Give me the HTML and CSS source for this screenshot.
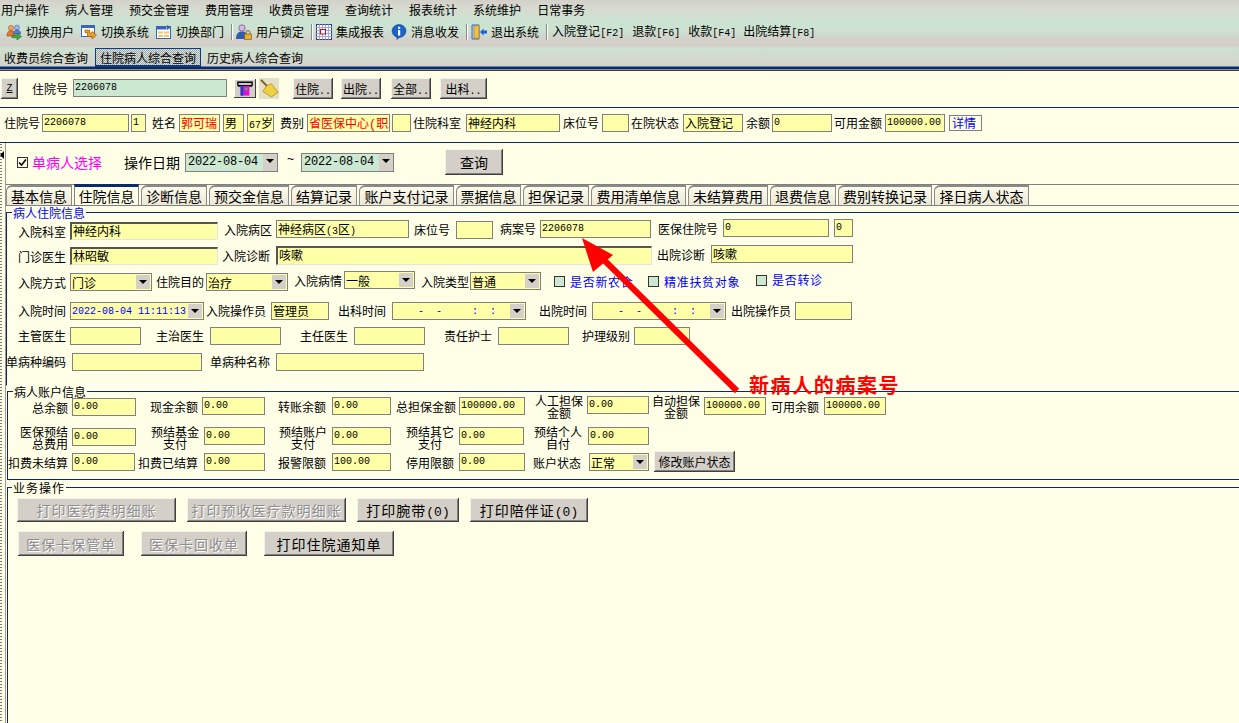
FILE: index.html
```html
<!DOCTYPE html>
<html lang="zh-CN">
<head>
<meta charset="utf-8">
<title>住院病人综合查询</title>
<link rel="stylesheet" href="styles.css">
</head>
<body>
<div class="page">
  <header class="top">
    <nav class="menu">
      <span>用户操作</span><span>病人管理</span><span>预交金管理</span><span>费用管理</span><span>收费员管理</span><span>查询统计</span><span>报表统计</span><span>系统维护</span><span>日常事务</span>
    </nav>
    <div class="toolbar">
      <div class="tool">
        <svg class="ico" viewBox="0 0 16 16"><circle cx="5" cy="4" r="2.6" fill="#e9a06a" stroke="#a05a30" stroke-width=".6"/><path d="M1 12c0-4 2-5.500 4-5.500s4 1.500 4 5.500z" fill="#e2762e" stroke="#8a4a20" stroke-width=".6"/><circle cx="11" cy="3.500" r="2.400" fill="#9fb8e6" stroke="#4a64a8" stroke-width=".6"/><path d="M7.500 10c0-3 1.500-4 3.500-4s3.500 1 3.500 4z" fill="#5a7ed0" stroke="#2c4a90" stroke-width=".6"/><path d="M6 11.500h5V9l4.500 3.500L11 16v-2.300H6z" fill="#3cb043" stroke="#1a6e20" stroke-width=".6"/></svg>
        <span>切换用户</span>
      </div>
      <div class="tool">
        <svg class="ico" viewBox="0 0 16 16"><rect x=".5" y="1.500" width="13" height="11" fill="#fff" stroke="#3a64b8"/><rect x=".5" y="1.500" width="13" height="2.500" fill="#3a64b8"/><path d="M4 6h4.500v3H11V7.500L15.500 11 11 15v-2.500H6.500v-4H4z" fill="#f0a020" stroke="#a05a10" stroke-width=".7"/></svg>
        <span>切换系统</span>
      </div>
      <div class="tool">
        <svg class="ico" viewBox="0 0 16 16"><rect x=".5" y="2.500" width="14" height="12" fill="#fff" stroke="#3a64b8"/><rect x=".5" y="2.500" width="10" height="3" fill="#3a64b8"/><path d="M2 7.500h5v2H2zM8 7.500h5v2H8zM2 11h5v2H2zM8 11h5v2H8z" fill="#f2c770"/><path d="M11 1l4 2.500-4 2.500z" fill="#3a64b8"/></svg>
        <span>切换部门</span>
      </div>
      <i class="sep"></i>
      <div class="tool">
        <svg class="ico" viewBox="0 0 16 16"><circle cx="6" cy="4" r="3.200" fill="#d8b8e0" stroke="#6a4a90" stroke-width=".7"/><path d="M0 15c0-6 3-7.500 6-7.500s6 1.500 6 7.500z" fill="#2f5cb0"/><rect x="8.500" y="10" width="7" height="5.500" fill="#e8b030" stroke="#8a6410" stroke-width=".7"/><path d="M10 10V8.500a2 2 0 014 0V10" fill="none" stroke="#8a6410"/></svg>
        <span>用户锁定</span>
      </div>
      <i class="sep"></i>
      <div class="tool">
        <svg class="ico" viewBox="0 0 16 16"><rect x=".5" y=".5" width="15" height="15" fill="#fff" stroke="#3040a0"/><path d="M.5 3.500h15M.5 6.500h15M.5 9.500h15M.5 12.500h15M3.500.5v15M6.500.5v15M9.500.5v15M12.500.5v15" stroke="#a0a8e0"/><rect x="4.500" y="5.500" width="5" height="4.500" fill="#fff" stroke="#b01030"/></svg>
        <span>集成报表</span>
      </div>
      <div class="tool">
        <svg class="ico" viewBox="0 0 16 16"><path d="M8 .5a7 6.500 0 110 13l-2 2v-2.300A7 6.500 0 018 .5z" fill="#1c62c8" stroke="#0c3a80" stroke-width=".6"/><rect x="7" y="2.800" width="2.200" height="2" fill="#fff"/><rect x="7" y="6" width="2.200" height="5.500" fill="#fff"/></svg>
        <span>消息收发</span>
      </div>
      <i class="sep"></i>
      <div class="tool">
        <svg class="ico" viewBox="0 0 16 16"><path d="M1 1h7v14H1z" fill="#b8ccf0" stroke="#3a64b8"/><path d="M3 2.500l5-1.500v14l-5-1.500z" fill="#f0c040" stroke="#a07810" stroke-width=".6"/><path d="M9 8l3.500-3.500v2H16v3h-3.500v2z" fill="#1c62e0"/></svg>
        <span>退出系统</span>
      </div>
      <i class="sep sep-last"></i>
      <span class="cmd">入院登记<span class="mono">[F2]</span></span>
      <span class="cmd">退款<span class="mono">[F6]</span></span>
      <span>收款<span class="mono">[F4]</span></span>
      <span>出院结算<span class="mono">[F8]</span></span>
    </div>
    <div class="doc-tabs">
      <span class="doc-tab">收费员综合查询</span>
      <span class="doc-tab doc-tab-on">住院病人综合查询</span>
      <span class="doc-tab doc-tab-last">历史病人综合查询</span>
    </div>
  </header>

  <section class="search">
    <button class="btn btn-z"><u>Z</u></button>
    <span class="search-label">住院号</span>
    <div class="field green num search-input">2206078</div>
    <button class="icon-btn icon-print" aria-label="打印">
      <svg viewBox="0 0 18 16"><path d="M1 5V1h16v4" fill="none" stroke="#000" stroke-width="1.500"/><rect x="1" y="4" width="16" height="2" fill="#000"/><rect x="4" y="5" width="10" height="11" fill="#e010d8"/><rect x="4" y="5" width="3" height="11" fill="#2040c0"/><rect x="9" y="7" width="3" height="3" fill="#50b040"/></svg>
    </button>
    <button class="icon-btn icon-broom" aria-label="清除">
      <svg viewBox="0 0 20 20"><path d="M1 1l8 8" stroke="#7a5a20" stroke-width="2"/><path d="M7 7l5-2 7 9-7 5-9-6z" fill="#f0d040" stroke="#a08010" stroke-width=".7"/></svg>
    </button>
    <button class="btn btn-s">住院<span class="mono">..</span></button>
    <button class="btn btn-s ml8">出院<span class="mono">..</span></button>
    <button class="btn btn-s ml10">全部<span class="mono">..</span></button>
    <button class="btn btn-s btn-last">出科<span class="mono">..</span></button>
  </section>

  <section class="info">
    <span class="lab pr2">住院号</span><div class="field num">2206078</div>
    <div class="field num ml2">1</div>
    <span class="lab pr3">姓名</span><div class="field red">郭可瑞</div>
    <div class="field ml3">男</div>
    <div class="field ml3"><span class="mono">67</span>岁</div>
    <span class="lab pr3">费别</span><div class="field red clip">省医保中心<span class="paren">(</span>职工)</div>
    <div class="field ml2"></div>
    <span class="lab pr5">住院科室</span><div class="field">神经内科</div>
    <span class="lab pr3">床位号</span><div class="field"></div>
    <span class="lab pr4">在院状态</span><div class="field">入院登记</div>
    <span class="lab pr2">余额</span><div class="field num">0</div>
    <span class="lab pr3">可用金额</span><div class="field num">100000.00</div>
    <div class="field link ml4">详情</div>
  </section>

  <div class="body">
    <aside class="split"><b class="split-arrow"></b></aside>
    <main class="main">
      <div class="filter">
        <span class="cb cb-on"><svg viewBox="0 0 9 9"><path d="M1 4.500l2.500 2.500L8 1.500" fill="none" stroke="#000" stroke-width="1.600"/></svg></span>
        <span class="pink">单病人选择</span>
        <span class="filter-label">操作日期</span>
        <div class="date-box">2022-08-04<i class="arrow"></i></div>
        <span class="tilde">~</span>
        <div class="date-box date-box-2">2022-08-04<i class="arrow"></i></div>
        <button class="btn btn-query">查询</button>
      </div>

      <div class="tabs">
        <span class="tab">基本信息</span>
        <span class="tab tab-on">住院信息</span>
        <span class="tab">诊断信息</span>
        <span class="tab">预交金信息</span>
        <span class="tab">结算记录</span>
        <span class="tab">账户支付记录</span>
        <span class="tab">票据信息</span>
        <span class="tab">担保记录</span>
        <span class="tab">费用清单信息</span>
        <span class="tab">未结算费用</span>
        <span class="tab">退费信息</span>
        <span class="tab">费别转换记录</span>
        <span class="tab">择日病人状态</span>
      </div>

      <section class="group g-inp">
        <span class="legend legend-blue">病人住院信息</span>
        <div class="row ra">
          <span class="lab m4">入院科室</span><div class="field inset m3">神经内科</div>
          <span class="lab m2">入院病区</span><div class="field m1">神经病区<span class="mono">(3</span>区<span class="mono">)</span></div>
          <span class="lab pr6 m2">床位号</span><div class="field m2"></div>
          <span class="lab m1">病案号</span><div class="field num m1">2206078</div>
          <span class="lab pr5 m1">医保住院号</span><div class="field num">0</div>
          <div class="field num ml5">0</div>
        </div>
        <div class="row rb">
          <span class="lab m3">门诊医生</span><div class="field inset m2">林昭敏</div>
          <span class="lab pr6 m2">入院诊断</span><div class="field inset tall m1">咳嗽</div>
          <span class="lab pr6 m1">出院诊断</span><div class="field">咳嗽</div>
        </div>
        <div class="row rc">
          <span class="lab m3">入院方式</span><div class="field select m2">门诊<i class="arrow"></i></div>
          <span class="lab pr2 m2">住院目的</span><div class="field select m2">治疗<i class="arrow"></i></div>
          <span class="lab pr2 m1">入院病情</span><div class="field select">一般<i class="arrow"></i></div>
          <span class="lab pr1 m2">入院类型</span><div class="field select m1">普通<i class="arrow"></i></div>
          <label class="check check-first"><span class="cb"></span><span>是否新农合</span></label>
          <label class="check"><span class="cb"></span><span>精准扶贫对象</span></label>
          <label class="check check-up"><span class="cb"></span><span>是否转诊</span></label>
        </div>
        <div class="row rd">
          <span class="lab">入院时间</span><div class="field select blue-num">2022-08-04 11:11:13<i class="arrow"></i></div>
          <span class="lab pr5">入院操作员</span><div class="field">管理员</div>
          <span class="lab pr6">出科时间</span><div class="field select blue-num pre">    -  -     :  :<i class="arrow"></i></div>
          <span class="lab pr5">出院时间</span><div class="field select blue-num pre">    -  -     :  :<i class="arrow"></i></div>
          <span class="lab">出院操作员</span><div class="field"></div>
        </div>
        <div class="row re">
          <span class="lab">主管医生</span><div class="field"></div>
          <span class="lab pr6">主治医生</span><div class="field"></div>
          <span class="lab pr6">主任医生</span><div class="field"></div>
          <span class="lab pr6">责任护士</span><div class="field"></div>
          <span class="lab">护理级别</span><div class="field"></div>
        </div>
        <div class="row rf">
          <span class="lab pr6">单病种编码</span><div class="field"></div>
          <span class="lab pr6">单病种名称</span><div class="field"></div>
        </div>
      </section>

      <section class="group g-acc">
        <span class="legend">病人账户信息</span>
        <div class="row r1">
          <span class="lab m3">总余额</span><div class="field num m2">0.00</div>
          <span class="lab m2">现金余额</span><div class="field num m1">0.00</div>
          <span class="lab pr6 m2">转账余额</span><div class="field num m1">0.00</div>
          <span class="lab pr3 m2">总担保金额</span><div class="field num m1">100000.00</div>
          <span class="lab two">人工担保<br>金额</span><div class="field num">0.00</div>
          <span class="lab two">自动担保<br>金额</span><div class="field num m1">100000.00</div>
          <span class="lab pr5 m2">可用余额</span><div class="field num m1">100000.00</div>
        </div>
        <div class="row r2">
          <span class="lab two two-r">医保预结<br>总费用</span><div class="field num m1">0.00</div>
          <span class="lab two pr5">预结基金<br>支付</span><div class="field num">0.00</div>
          <span class="lab two pr5">预结账户<br>支付</span><div class="field num">0.00</div>
          <span class="lab two pr5">预结其它<br>支付</span><div class="field num">0.00</div>
          <span class="lab two pr6">预结个人<br>自付</span><div class="field num">0.00</div>
        </div>
        <div class="row r3">
          <span class="lab m3">扣费未结算</span><div class="field num m2">0.00</div>
          <span class="lab pr6 m3">扣费已结算</span><div class="field num m2">0.00</div>
          <span class="lab pr6 m3">报警限额</span><div class="field num m2">100.00</div>
          <span class="lab pr5 m3">停用限额</span><div class="field num m2">0.00</div>
          <span class="lab pr8 m3">账户状态</span><div class="field select m2">正常<i class="arrow"></i></div>
          <button class="btn btn-acct">修改账户状态</button>
        </div>
      </section>

      <section class="group g-ops">
        <span class="legend legend-ops">业务操作</span>
        <div class="ops ops-1">
          <button class="btn btn-big" disabled>打印医药费明细账</button>
          <button class="btn btn-big" disabled>打印预收医疗款明细账</button>
          <button class="btn btn-big">打印腕带<span class="mono-b">(0)</span></button>
          <button class="btn btn-big">打印陪伴证<span class="mono-b">(0)</span></button>
        </div>
        <div class="ops ops-2">
          <button class="btn btn-big" disabled>医保卡保管单</button>
          <button class="btn btn-big" disabled>医保卡回收单</button>
          <button class="btn btn-big">打印住院通知单</button>
        </div>
      </section>
    </main>
  </div>

  <svg class="pointer" viewBox="0 0 1239 723" aria-hidden="true">
    <line x1="737" y1="391" x2="600" y2="256" stroke="#ff0000" stroke-width="6"/>
    <polygon points="582,238 613,255 593,272" fill="#ff0000"/>
  </svg>
  <span class="note">新病人的病案号</span>
</div>
</body>
</html>
```
FILE: styles.css
```css
* { box-sizing: border-box; }
html, body { margin: 0; padding: 0; }
body {
  font-family: "Noto Sans CJK SC", "Liberation Sans", sans-serif;
  font-size: 12px;
  color: #000;
  background: #ffffe8;
}
.page {
  position: relative;
  width: 1239px;
  height: 723px;
  overflow: hidden;
  background: #ffffe8;
}
.mono { font-family: "Liberation Mono", monospace; font-size: 10px; }
.mono-b { font-family: "Liberation Mono", monospace; font-size: 13px; letter-spacing: 0; font-weight: 400; }
.paren { font-family: "Liberation Mono", monospace; font-size: 12px; }

/* header band */
.top {
  height: 71px;
  background: linear-gradient(180deg,
    #d3d0ca 0, #d6dacf 8px, #cde3d2 21px, #cde3d2 29px, #d3cfc9 41px, #d3cfc9 46px,
    #cfe0d0 48px, #d4d4cc 66px,
    #5f86b4 66px, #5f86b4 67px, #0a2a70 67px, #0a2a70 69px, #8f8f8a 69px, #8f8f8a 70px, #4a3d34 70px);
}
.menu { display: flex; gap: 16px; height: 21px; padding-left: 1px; line-height: 20px; }
.toolbar { display: flex; align-items: center; gap: 7px; height: 22px; padding-left: 6px; line-height: 22px; }
.tool { display: flex; align-items: center; gap: 4px; }
.ico { width: 16px; height: 16px; flex: none; }
.sep { width: 2px; height: 16px; margin-right: -4px; border-left: 1px solid #8a8a86; border-right: 1px solid #fff; }
.sep-last { margin-right: -3px; }
.cmd { margin-right: 1px; }
.doc-tabs { display: flex; height: 19px; margin-top: 5px; padding-left: 4px; line-height: 20px; }
.doc-tab { width: 84px; white-space: nowrap; }
.doc-tab-on {
  width: 106px;
  margin-left: 7px;
  padding-left: 4px;
  border: 1px solid #123a7a;
  border-bottom-width: 2px;
  line-height: 18px;
  background: repeating-conic-gradient(#9aa8ac 0 25%, #dde2da 0 50%) 0 0 / 2px 2px;
}
.doc-tab-last { margin-left: 6px; width: 96px; }

/* search row */
.search { display: flex; align-items: center; height: 36px; padding: 0 0 2px 1px; }
.btn {
  display: block;
  padding: 0;
  border: 0;
  background: #d4d0c8;
  color: #000;
  font: inherit;
  text-align: center;
  white-space: nowrap;
  box-shadow: inset -1px -1px 0 #404040, inset 1px 1px 0 #f4f2ee, inset -2px -2px 0 #808080;
}
.btn:disabled { color: #8e8e8e; text-shadow: 1px 1px 0 #fff; }
.btn-z { width: 17px; height: 21px; font-family: "Liberation Mono", monospace; font-size: 10px; }
.btn-s { width: 40px; height: 21px; margin-left: 0; }
.search-label { margin-left: 14px; width: 41px; }
.search-input { width: 154px; height: 18px; }
.icon-btn {
  display: flex; align-items: center; justify-content: center;
  padding: 0; border: 0;
  background: #d4d0c8;
  box-shadow: inset -1px -1px 0 #404040, inset 1px 1px 0 #fff;
}
.icon-print { width: 22px; height: 19px; margin-left: 7px; }
.icon-print svg { width: 16px; height: 15px; }
.icon-broom { width: 20px; height: 21px; margin: 0 14px 0 3px; background: #e4e0c8; box-shadow: none; }
.icon-broom svg { width: 19px; height: 19px; }
.ml8 { margin-left: 8px; }
.ml10 { margin-left: 10px; }
.btn-last { width: 47px; margin-left: 9px; }

/* info strip */
.info {
  display: grid;
  grid-template-columns: 42px 87px 17px 33px 41px 24px 30px 33px 83px 21px 55px 94px 42px 27px 54px 60px 29px 60px 53px 60px 37px;
  align-items: center;
  height: 36px;
  padding-bottom: 4px;
  border-top: 1px solid #0a2a70;
  border-bottom: 1px solid #0a2a70;
}

/* fields */
.lab {
  display: flex;
  justify-content: flex-end;
  padding-right: 4px;
  line-height: 18px;
  text-align: center;
  white-space: nowrap;
}
.field {
  height: 18px;
  min-width: 0;
  padding-left: 1px;
  border: 1px solid #808080;
  background: #ffffa8;
  line-height: 15px;
  white-space: nowrap;
  overflow: hidden;
}
.num { font-family: "Liberation Mono", monospace; font-size: 10px; }
.red { color: #f00; }
.clip { text-overflow: clip; }
.green { background: #cce8d0; }
.link { height: 16px; background: #ffffe8; color: #00f; line-height: 13px; padding-left: 2px; }
.inset {
  border-width: 2px 1px 1px 2px;
  border-color: #555 #e4e4d8 #e4e4d8 #555;
  line-height: 14px;
}
.tall { height: 19px; }
.select { display: flex; justify-content: space-between; align-items: center; }
.blue-num { font-family: "Liberation Mono", monospace; font-size: 10px; color: #00f; }
.pre { white-space: pre; }
.arrow {
  position: relative;
  flex: none;
  width: 14px;
  height: 14px;
  margin-right: 1px;
  background: #d4d0c8;
}
.arrow::after {
  content: "";
  position: absolute;
  left: 3px;
  top: 5px;
  border: 4px solid transparent;
  border-top: 4px solid #000;
  border-bottom: 0;
}
.m1 { margin-top: 1px; }
.m2 { margin-top: 2px; }
.m3 { margin-top: 3px; }
.m4 { margin-top: 4px; }
.ml2 { margin-left: 2px; }
.ml3 { margin-left: 3px; }
.ml4 { margin-left: 4px; }
.ml5 { margin-left: 5px; }
.pr1 { padding-right: 1px; }
.pr2 { padding-right: 2px; }
.pr3 { padding-right: 3px; }
.pr4 { padding-right: 4px; }
.pr5 { padding-right: 5px; }
.pr6 { padding-right: 6px; }
.pr8 { padding-right: 8px; }

/* body */
.body { display: flex; height: 581px; }
.split {
  position: relative;
  flex: none;
  width: 6px;
  background: radial-gradient(circle, #7a7a70 45%, transparent 50%) 0 0 / 2px 3px repeat-y;
  border-right: 1px solid #9a9a92;
}
.split-arrow {
  position: absolute;
  left: 0;
  top: 8px;
  border: 4px solid transparent;
  border-left: 0;
  border-right: 4px solid #000;
}
.main { flex: 1; min-width: 0; }
.filter { display: flex; align-items: center; height: 41px; padding: 0 0 3px 11px; }
.cb {
  display: flex;
  flex: none;
  width: 11px;
  height: 11px;
  padding: 0;
  border: 1px solid #333;
  background: #cce8d0;
}
.cb-on { background: #ffffe8; }
.cb-on svg { width: 9px; height: 9px; }
.pink { width: 70px; margin-left: 4px; color: #ff00ff; font-size: 14px; }
.filter-label { margin-left: 22px; width: 61px; font-size: 14px; }
.date-box {
  display: flex;
  justify-content: space-between;
  align-items: center;
  width: 93px;
  height: 19px;
  padding-left: 2px;
  border: 1px solid #808080;
  background: #cce8d0;
  font-family: "Liberation Mono", monospace;
  font-size: 12px;
  letter-spacing: -.2px;
}
.date-box .arrow { height: 17px; margin-right: 0; background: #d4d0c8; }
.tilde { width: 23px; padding: 0 0 4px 9px; font-family: "Liberation Mono", monospace; font-size: 12px; }
.btn-query { width: 58px; height: 26px; margin-left: 51px; font-size: 14px; }

.tabs {
  display: grid;
  grid-template-columns: 66px 65px 66px 80px 66px 95px 65px 66px 95px 80px 66px 94px 95px;
  column-gap: 2px;
  height: 22px;
  border-top: 1px solid #808080;
  border-bottom: 1px solid #808080;
}
.tab {
  margin-top: 0;
  border: 1px solid #8a8a8a;
  border-top-width: 2px;
  border-bottom: 0;
  border-top-left-radius: 6px;
  background: linear-gradient(180deg, #fdfbe9, #ece8d8);
  font-size: 14px;
  line-height: 18px;
  text-align: center;
  white-space: nowrap;
}
.tab-on {
  position: relative;
  height: 21px;
  margin-top: -1px;
  border-top: 3px solid #0a2a70;
  border-left-color: #808080;
  border-top-left-radius: 0;
  background: #ffffe8;
}

/* group boxes */
.group {
  position: relative;
  border-top: 1px solid #0a2a70;
  border-left: 1px solid #0a2a70;
}
.legend {
  position: absolute;
  left: 5px;
  top: -7px;
  padding: 0 1px;
  background: #ffffe8;
  line-height: 13px;
}
.legend-blue { color: #00f; }
.legend-ops { left: 4px; letter-spacing: 1px; }
.g-inp {
  display: grid;
  grid-template-rows: 26px 26px 31px 25px 26px 18px;
  align-content: start;
  height: 174px;
  margin-top: 6px;
  padding-top: 6px;
  border-bottom: 1px solid #fff;
}
.g-acc {
  display: grid;
  grid-template-rows: 31px 24px 21px;
  align-content: start;
  height: 89px;
  margin: 5px 0 0 1px;
  padding-top: 4px;
  border-bottom: 1px solid #0a2a70;
}
.g-ops { height: 300px; margin: 7px 0 0 1px; padding-top: 10px; }
.row { display: grid; align-items: start; justify-content: start; }
.ra { grid-template-columns: 63px 148px 58px 133px 47px 37px 47px 111px 72px 106px 24px; }
.rb { grid-template-columns: 63px 148px 58px 376px 59px 142px; }
.rc { grid-template-columns: 63px 82px 54px 82px 56px 71px 55px 71px 107px 108px 70px; }
.rd { grid-template-columns: 63px 134px 67px 58px 63px 134px 66px 134px 69px 57px; }
.re { grid-template-columns: 63px 71px 69px 71px 73px 71px 73px 71px 65px 56px; }
.rf { grid-template-columns: 65px 130px 74px 148px; }
.r1 { grid-template-columns: 64px 64px 66px 63px 67px 59px 68px 66px 62px 62px 55px 62px 58px 62px; }
.r2 { grid-template-columns: 64px 64px 68px 61px 67px 59px 68px 65px 64px 61px; }
.r3 { grid-template-columns: 64px 63px 69px 61px 67px 59px 68px 66px 64px 60px 86px; }
.two { margin-top: -1px; line-height: 12px; }
.two-r { text-align: right; }
.check {
  display: flex;
  align-items: center;
  gap: 5px;
  height: 18px;
  margin-top: 1px;
  color: #00f;
  letter-spacing: .7px;
  white-space: nowrap;
}
.check-first { padding-left: 13px; }
.check-up { margin-top: -1px; }
.check-up .cb { margin-top: 3px; }
.btn-acct { width: 81px; height: 21px; margin-left: 5px; }
.ops { display: grid; justify-content: start; }
.ops-1 { grid-template-columns: 159px 159px 102px 118px; column-gap: 11px; margin-left: 9px; }
.ops-2 { grid-template-columns: 106px 106px 130px; column-gap: 17px; margin: 9px 0 0 10px; }
.btn-big { height: 24px; font-size: 14px; letter-spacing: 1px; }
.ops-2 .btn-big { height: 25px; }

/* annotation */
.pointer {
  position: absolute;
  left: 0;
  top: 0;
  width: 1239px;
  height: 723px;
  pointer-events: none;
}
.note {
  position: absolute;
  left: 749px;
  top: 373px;
  color: #f00;
  font-size: 20px;
  font-weight: 700;
  letter-spacing: 1.6px;
  line-height: 24px;
  white-space: nowrap;
}
```
